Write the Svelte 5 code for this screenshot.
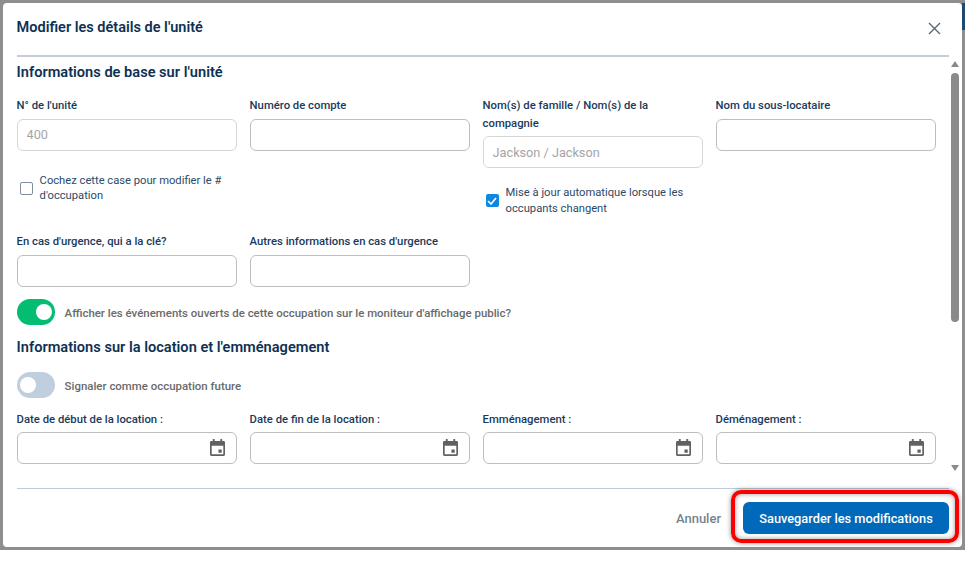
<script lang="ts">
  const topFields = [
    { label: "N° de l'unité", placeholder: '400' },
    { label: 'Numéro de compte', placeholder: '' },
    { label: 'Nom(s) de famille / Nom(s) de la compagnie', placeholder: 'Jackson / Jackson' },
    { label: 'Nom du sous-locataire', placeholder: '' },
  ];
  const dates = ['Date de début de la location :', 'Date de fin de la location :', 'Emménagement :', 'Déménagement :'];
</script>

<div class="backdrop">
  <div class="modal">
    <header class="head">
      <h2>Modifier les détails de l'unité</h2>
      <button type="button" class="close" aria-label="Fermer">
        <svg width="13" height="13" viewBox="0 0 13 13"><path d="M1 1l11 11M12 1L1 12" stroke="#5b6570" stroke-width="1.4" fill="none" /></svg>
      </button>
    </header>

    <div class="body">
      <div class="scroll">
        <h3 class="first">Informations de base sur l'unité</h3>

        <div class="grid top">
          {#each topFields as f, i}
            <div class="field">
              <label for="f{i}">{f.label}</label>
              <input id="f{i}" type="text" placeholder={f.placeholder} class:dim={f.placeholder} />
              {#if i === 0}
                <div class="check one">
                  <span class="box"></span>
                  <span>Cochez cette case pour modifier le # d'occupation</span>
                </div>
              {:else if i === 2}
                <div class="check two">
                  <span class="box on">
                    <svg width="10" height="8" viewBox="0 0 10 8"><path d="M1 4l3 3 5-6" stroke="#fff" stroke-width="1.6" fill="none" /></svg>
                  </span>
                  <span>Mise à jour automatique lorsque les occupants changent</span>
                </div>
              {/if}
            </div>
          {/each}
        </div>

        <div class="grid emergency">
          <div class="field">
            <label for="e1">En cas d'urgence, qui a la clé?</label>
            <input id="e1" type="text" />
          </div>
          <div class="field">
            <label for="e2">Autres informations en cas d'urgence</label>
            <input id="e2" type="text" />
          </div>
        </div>

        <div class="toggle-row public">
          <span class="toggle on"><span class="knob"></span></span>
          <span class="toggle-text">Afficher les événements ouverts de cette occupation sur le moniteur d'affichage public?</span>
        </div>

        <h3 class="second">Informations sur la location et l'emménagement</h3>

        <div class="toggle-row future">
          <span class="toggle"><span class="knob"></span></span>
          <span class="toggle-text">Signaler comme occupation future</span>
        </div>

        <div class="grid">
          {#each dates as d, i}
            <div class="field">
              <label for="d{i}">{d}</label>
              <div class="date">
                <input id="d{i}" type="text" />
                <svg class="cal" width="15" height="17" viewBox="0 0 16 18">
                  <path fill="#616161" fill-rule="evenodd" d="M3 0h2v2h6V0h2v2h1.500A1.500 1.500 0 0 1 16 3.500v13a1.500 1.500 0 0 1-1.500 1.500h-13A1.500 1.500 0 0 1 0 16.500v-13A1.500 1.500 0 0 1 1.500 2H3zM1.800 7v9.200h12.400V7zM9 11h3.500v3.500H9z" />
                </svg>
              </div>
            </div>
          {/each}
        </div>
      </div>

      <div class="scrollbar" aria-hidden="true">
        <span class="arrow up"></span>
        <span class="thumb"></span>
        <span class="arrow down"></span>
      </div>
    </div>

    <footer class="foot">
      <button type="button" class="cancel">Annuler</button>
      <div class="highlight">
        <button type="button" class="save">Sauvegarder les modifications</button>
      </div>
    </footer>
  </div>
</div>

<style>
  :global(body) {
    margin: 0;
    background: #fff;
    font-family: Roboto, "Liberation Sans", sans-serif;
  }
  .backdrop {
    width: 965px;
    height: 550px;
    padding: 3px;
    box-sizing: border-box;
    background:
      linear-gradient(#1c4a72, #1c4a72) right 3px / 3px 27px no-repeat,
      #8e8e8e;
  }
  .modal {
    height: 544px;
    background: #fff;
    border-radius: 4px;
    display: flex;
    flex-direction: column;
    overflow: hidden;
  }
  .head {
    height: 54px;
    margin-left: 13.600px;
    width: 932px;
    padding: 0 8px 4px 0;
    box-sizing: border-box;
    display: flex;
    align-items: center;
    justify-content: space-between;
    border-bottom: 2px solid #c5cdd6;
    flex: none;
  }
  h2 {
    margin: 0;
    font-size: 14.500px;
    font-weight: 600;
    color: #0e3153;
  }
  .close {
    border: 0;
    background: none;
    padding: 0;
    width: 13px;
    height: 13px;
    margin-top: 2px;
    display: flex;
  }
  .body {
    flex: none;
    height: 431px;
    display: flex;
  }
  .scroll {
    width: 933px;
    padding-left: 13.600px;
    box-sizing: border-box;
  }
  h3 {
    margin: 0;
    font-size: 14.600px;
    font-weight: 600;
    color: #0e3153;
    line-height: 18px;
  }
  h3.first { padding-top: 6px; }
  h3.second { margin-top: 13px; }
  .grid {
    display: grid;
    grid-template-columns: repeat(4, 220px);
    column-gap: 13px;
  }
  .grid.top {
    margin-top: 15.250px;
    height: 134px;
  }
  .grid.emergency {
    margin-top: 2px;
  }
  .field {
    min-width: 0;
  }
  label {
    display: block;
    font-size: 11.300px;
    font-weight: 500;
    line-height: 17.500px;
    color: #1a3a5c;
    padding-top: 1px;
    margin-bottom: 4px;
  }
  input {
    display: block;
    width: 100%;
    height: 32px;
    box-sizing: border-box;
    border: 1px solid #bdbdbd;
    border-radius: 6px;
    padding: 0 14px;
    font: 12.700px Roboto, sans-serif;
    background: #fff;
  }
  input.dim { border-color: #d6d6d6; padding-left: 9px; }
  input::placeholder { color: #a5a5a5; opacity: 1; }
  .check {
    display: flex;
    align-items: center;
    gap: 7px;
    font-size: 11.200px;
    line-height: 15.500px;
    color: #2c4a68;
  }
  .check.one { margin: 22px 0 0 3px; }
  .check.two { margin: 17px 0 0 3px; }
  .box {
    width: 13px;
    height: 13px;
    flex: none;
    border: 1.500px solid #7d8fa3;
    border-radius: 2px;
    box-sizing: border-box;
  }
  .box.on {
    background: #0d87e0;
    border: 0;
    display: flex;
    align-items: center;
    justify-content: center;
  }
  .toggle-row {
    display: flex;
    align-items: center;
    gap: 10px;
    font-size: 11.450px;
    font-weight: 500;
    color: #6a6a6a;
  }
  .toggle-text { padding-top: 2px; }
  .toggle-row.public { margin-top: 12px; }
  .toggle-row.future { margin-top: 16.700px; margin-bottom: 11.500px; }
  .toggle {
    width: 38px;
    height: 26px;
    border-radius: 13px;
    background: #c0cfde;
    display: flex;
    align-items: center;
    padding: 0 3px;
    box-sizing: border-box;
    flex: none;
  }
  .toggle.on {
    background: #02bd72;
    justify-content: flex-end;
  }
  .knob {
    width: 16px;
    height: 16px;
    border-radius: 50%;
    background: #fff;
  }
  .date { position: relative; }
  .cal {
    position: absolute;
    right: 11.500px;
    top: 6.500px;
  }
  .scrollbar {
    width: 11px;
    height: 414px;
    margin-left: 13.500px;
    padding-top: 4px;
    box-sizing: border-box;
    display: flex;
    flex-direction: column;
    align-items: center;
  }
  .thumb {
    width: 8px;
    height: 249px;
    margin-top: 6px;
    border-radius: 4px;
    background: #8a8a8a;
  }
  .arrow {
    width: 0;
    height: 0;
    border-left: 4.500px solid transparent;
    border-right: 4.500px solid transparent;
  }
  .arrow.up { border-bottom: 6px solid #8a8a8a; }
  .arrow.down {
    border-top: 6px solid #8a8a8a;
    margin-top: auto;
  }
  .foot {
    flex: 1;
    margin: 0 13px 0 13.600px;
    border-top: 1px solid #bfc9d8;
    display: flex;
    align-items: center;
    justify-content: flex-end;
    gap: 22px;
  }
  .cancel {
    border: 0;
    background: none;
    padding: 0;
    font: 500 13px Roboto, sans-serif;
    color: #76848f;
  }
  .highlight {
    position: relative;
  }
  .highlight::after {
    content: "";
    position: absolute;
    inset: -12px -10px -9px -12px;
    border: 4px solid #fa0000;
    border-radius: 10px;
    box-shadow: 0 0 5px rgba(0, 0, 0, 0.45), inset 0 0 5px rgba(0, 0, 0, 0.4);
    pointer-events: none;
  }
  .save {
    display: block;
    width: 206px;
    height: 32px;
    border: 0;
    border-radius: 6px;
    background: #0069b9;
    color: #fff;
    font: 500 12.800px Roboto, sans-serif;
  }
</style>
